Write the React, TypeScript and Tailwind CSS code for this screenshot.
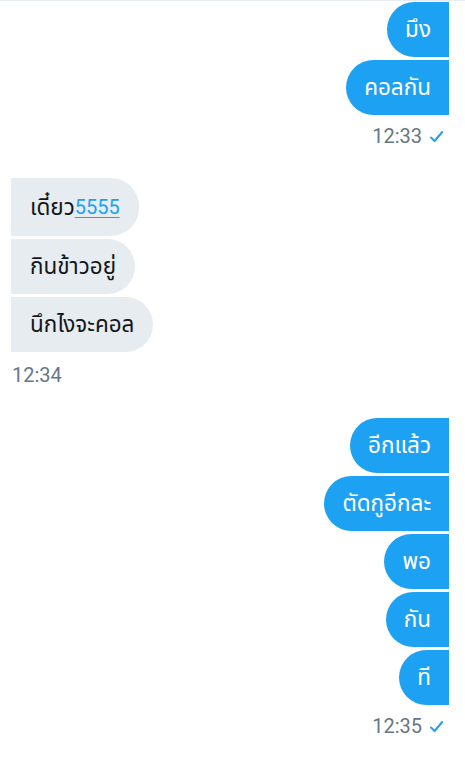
import React from "react";

type Group = {
    mine: boolean;
    time: string;
    messages: React.ReactNode[];
    timeGap: string;
    groupGap: string;
};

// Thai glyphs from the fallback font render small, so they get a bigger size than the digits
function Th({ children }: { children: React.ReactNode }) {
    return <span className="text-[22.5px]">{children}</span>;
}

const groups: Group[] = [
    { mine: true, time: "12:33", messages: ["มึง", "คอลกัน"], timeGap: "mt-[8px]", groupGap: "mb-[29px]" },
    {
        mine: false,
        time: "12:34",
        messages: [
            <>
                <Th>เดี๋ยว</Th>
                <span className="text-[#1da1f2] underline underline-offset-[3px] decoration-1">5555</span>
            </>,
            "กินข้าวอยู่",
            "นึกไงจะคอล",
        ],
        timeGap: "mt-[10px]",
        groupGap: "mb-[30px]",
    },
    { mine: true, time: "12:35", messages: ["อีกแล้ว", "ตัดกูอีกละ", "พอ", "กัน", "ที"], timeGap: "mt-[8px]", groupGap: "mb-[29px]" },
];

function Check() {
    return (
        <svg width="15" height="15" viewBox="0 0 15 15" fill="none" className="ml-[7px]">
            <path d="M2 8.6 L5.6 12 L13.2 3" stroke="#1da1f2" strokeWidth="2" strokeLinecap="round" strokeLinejoin="round" />
        </svg>
    );
}

export default function App() {
    return (
        <div
            className="w-[465px] h-[761px] bg-white border-t border-[#e6ecf0] overflow-hidden pl-[11px] pr-[16px] pt-[1px]"
            style={{ fontFamily: "Roboto, 'Noto Sans Thai', 'Noto Sans', sans-serif" }}
        >
            {groups.map((g, gi) => (
                <div key={gi} className={`flex flex-col ${g.groupGap} ${g.mine ? "items-end" : "items-start"}`}>
                    <div className={`flex flex-col gap-[3px] ${g.mine ? "items-end" : "items-start"}`}>
                        {g.messages.map((m, i) => (
                            <div
                                key={i}
                                className={
                                    (g.mine
                                        ? "px-[18px] bg-[#1da1f2] text-white rounded-l-[28px]"
                                        : "px-[19px] bg-[#e6ecf0] text-[#14171a] rounded-r-[28px]") +
                                    (!g.mine && i === 0 ? " h-[58px]" : " h-[55px]") +
                                    " flex items-center text-[20px] leading-[27px]"
                                }
                            >
                                {typeof m === "string" ? <Th>{m}</Th> : m}
                            </div>
                        ))}
                    </div>
                    <div className={`flex items-center ${g.timeGap} text-[20px] leading-[26px] text-[#657786] ${g.mine ? "pr-[5px]" : "pl-[1px]"}`}>
                        <span>{g.time}</span>
                        {g.mine && <Check />}
                    </div>
                </div>
            ))}
        </div>
    );
}
